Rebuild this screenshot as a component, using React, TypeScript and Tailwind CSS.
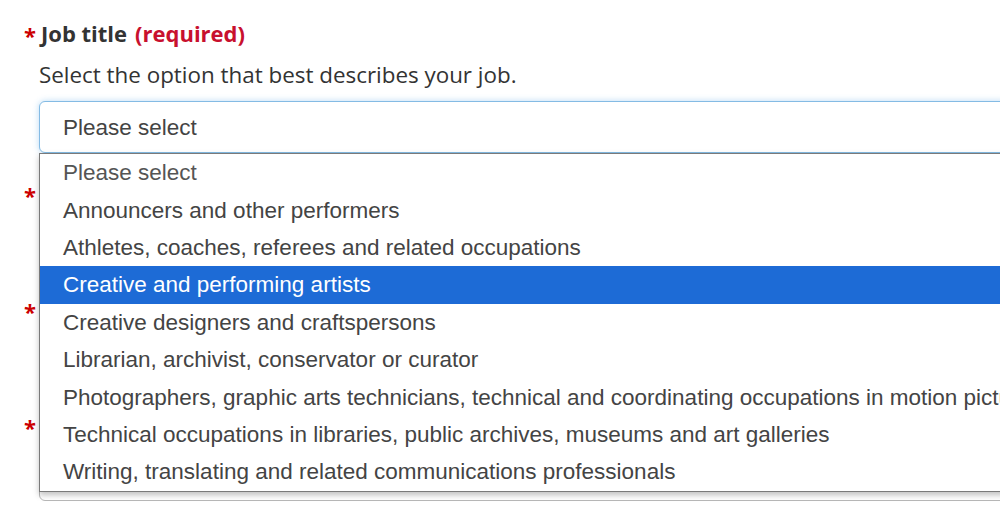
import React from "react";

const options = [
  "Please select",
  "Announcers and other performers",
  "Athletes, coaches, referees and related occupations",
  "Creative and performing artists",
  "Creative designers and craftspersons",
  "Librarian, archivist, conservator or curator",
  "Photographers, graphic arts technicians, technical and coordinating occupations in motion pictures, broadcasting and the performing arts",
  "Technical occupations in libraries, public archives, museums and art galleries",
  "Writing, translating and related communications professionals",
];

function Field() {
  return (
    <div className="mt-[25px]">
      <div className="flex h-[30px] items-center text-[22px] font-bold text-[#333]">
        <span className="text-[#cc0000] w-[17px] pt-[4px]">*</span>
      </div>
      <div className="ml-[15px] mt-[9px] h-[52px] w-[1000px] rounded-[6px] border border-[#b8b8b8] bg-white" />
    </div>
  );
}

export default function App() {
  return (
    <div
      className="relative h-[517px] w-[1000px] overflow-hidden bg-white pl-[24px] pt-[18px]"
      style={{ fontFamily: "'Open Sans', sans-serif" }}
    >
      <div className="flex h-[30px] items-center text-[22px] font-bold text-[#333]">
        <span className="text-[#cc0000] w-[17px] pt-[4px]">*</span>
        <span>Job title</span>
        <span className="ml-[8px] text-[#c8102e]">(required)</span>
      </div>
      <div className="ml-[15px] mt-[13px] text-[22.4px] leading-[28px] text-[#333]">
        Select the option that best describes your job.
      </div>
      <div
        className="relative ml-[15px] mt-[12px] flex h-[52px] w-[1000px] items-center rounded-[6px] border border-[#84bbe4] bg-white pl-[23px] pt-[2px] text-[22.5px] text-[#444] shadow-[0_0_6px_rgba(102,175,233,0.45)]"
        style={{ fontFamily: "'Liberation Sans', Arial, sans-serif" }}
      >
        Please select
      </div>
      <Field />
      <Field />
      <Field />

      <div
        className="absolute left-[39px] top-[153px] w-[1000px] border border-[#7a7a7a] bg-white shadow-[0_3px_6px_rgba(0,0,0,0.25)]"
        style={{ fontFamily: "'Liberation Sans', Arial, sans-serif" }}
      >
        {options.map((o, i) => (
          <div
            key={o}
            className={
              "flex h-[37.4px] items-center whitespace-nowrap pl-[23px] pt-[1px] text-[22.5px] " +
              (i === 3
                ? "bg-[#1d6bd6] text-white"
                : i === 0
                ? "text-[#555]"
                : "text-[#444]")
            }
          >
            {o}
          </div>
        ))}
      </div>
    </div>
  );
}
